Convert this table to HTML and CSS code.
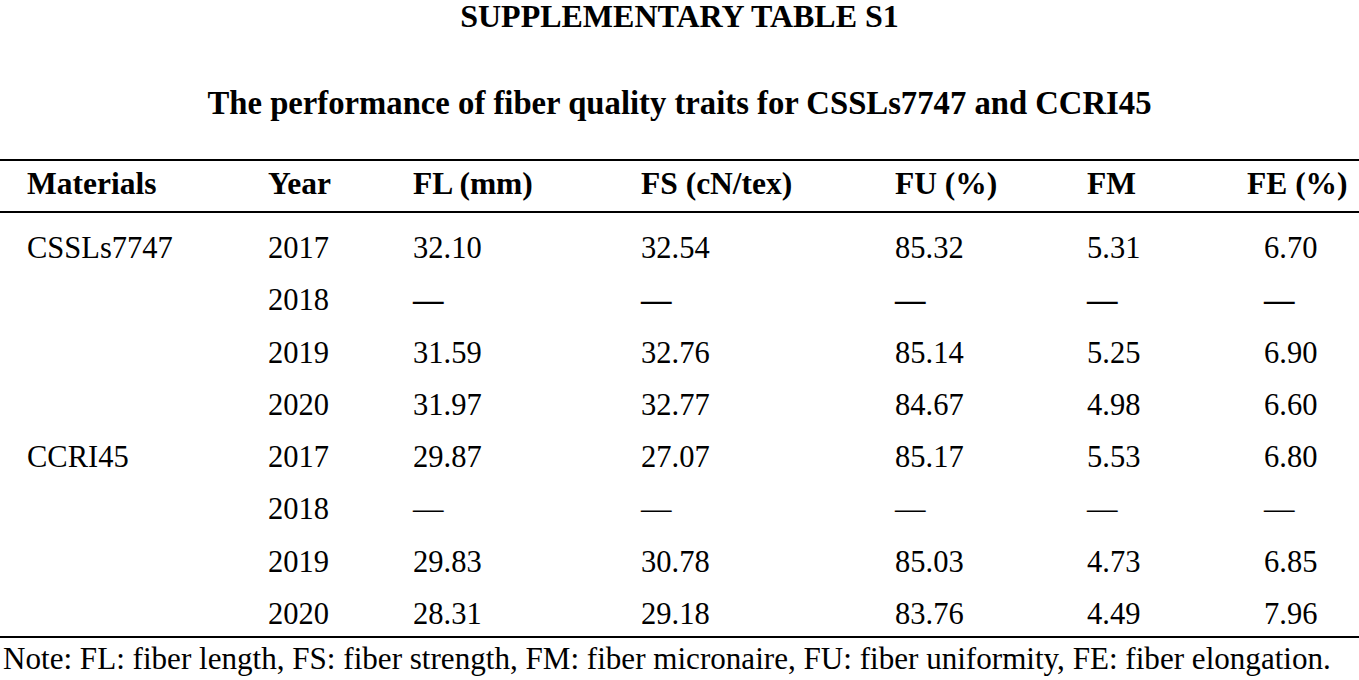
FILE: index.html
```html
<!DOCTYPE html>
<html lang="en">
<head>
<meta charset="utf-8">
<title>Supplementary Table S1</title>
<link rel="stylesheet" href="styles.css">
</head>
<body>
<h1 class="label">SUPPLEMENTARY TABLE S1</h1>
<h2 class="caption">The performance of fiber quality traits for CSSLs7747 and CCRI45</h2>
<table class="data">
  <colgroup>
    <col class="c1"><col class="c2"><col class="c3"><col class="c4"><col class="c5"><col class="c6"><col class="c7">
  </colgroup>
  <thead>
    <tr><th>Materials</th><th>Year</th><th>FL (mm)</th><th>FS (cN/tex)</th><th>FU (%)</th><th>FM</th><th>FE (%)</th></tr>
  </thead>
  <tbody>
    <tr class="first"><td>CSSLs7747</td><td>2017</td><td>32.10</td><td>32.54</td><td>85.32</td><td>5.31</td><td>6.70</td></tr>
    <tr><td></td><td>2018</td><td class="dash bold">—</td><td class="dash bold">—</td><td class="dash bold">—</td><td class="dash bold">—</td><td class="dash bold">—</td></tr>
    <tr><td></td><td>2019</td><td>31.59</td><td>32.76</td><td>85.14</td><td>5.25</td><td>6.90</td></tr>
    <tr><td></td><td>2020</td><td>31.97</td><td>32.77</td><td>84.67</td><td>4.98</td><td>6.60</td></tr>
    <tr><td>CCRI45</td><td>2017</td><td>29.87</td><td>27.07</td><td>85.17</td><td>5.53</td><td>6.80</td></tr>
    <tr><td></td><td>2018</td><td class="dash">—</td><td class="dash">—</td><td class="dash">—</td><td class="dash">—</td><td class="dash">—</td></tr>
    <tr><td></td><td>2019</td><td>29.83</td><td>30.78</td><td>85.03</td><td>4.73</td><td>6.85</td></tr>
    <tr class="last"><td></td><td>2020</td><td>28.31</td><td>29.18</td><td>83.76</td><td>4.49</td><td>7.96</td></tr>
  </tbody>
</table>
<p class="note">Note: FL: fiber length, FS: fiber strength, FM: fiber micronaire, FU: fiber uniformity, FE: fiber elongation.</p>
</body>
</html>
```
FILE: styles.css
```css
html, body {
  margin: 0;
  padding: 0;
  background: #fff;
  color: #000;
  font-family: "Liberation Serif", "Times New Roman", serif;
}

.label {
  margin: 0;
  font-size: 32px;
  line-height: 32px;
  font-weight: bold;
  text-align: center;
}

.caption {
  margin: 55px 0 0;
  font-size: 32.7px;
  line-height: 32px;
  font-weight: bold;
  text-align: center;
}

.data {
  margin-top: 40px;
  width: 100%;
  table-layout: fixed;
  border-collapse: collapse;
  border-top: 2px solid #000;
  border-bottom: 2px solid #000;
}

.c1 { width: 268px; }
.c2 { width: 145px; }
.c3 { width: 228px; }
.c4 { width: 254px; }
.c5 { width: 192px; }
.c6 { width: 160px; }
.c7 { width: 112px; }

.data th,
.data td {
  padding: 0;
  text-align: left;
  white-space: nowrap;
  vertical-align: top;
}

.data th:first-child,
.data td:first-child {
  padding-left: 27px;
}

.data td:last-child {
  padding-left: 17px;
}

.data thead tr {
  border-bottom: 2px solid #000;
}

.data th {
  font-size: 31.5px;
  font-weight: bold;
  line-height: 45px;
  padding-bottom: 5px;
}

.data td {
  font-size: 30.5px;
  line-height: 52.3px;
}

.data tr.first td {
  padding-top: 9px;
}

.data tr.last td {
  padding-top: 4px;
  line-height: 44px;
}

.data td.bold {
  font-weight: bold;
}

.note {
  margin: 0;
  padding-top: 4px;
  font-size: 31.1px;
  line-height: 34px;
  padding-left: 3px;
  white-space: nowrap;
}
```
